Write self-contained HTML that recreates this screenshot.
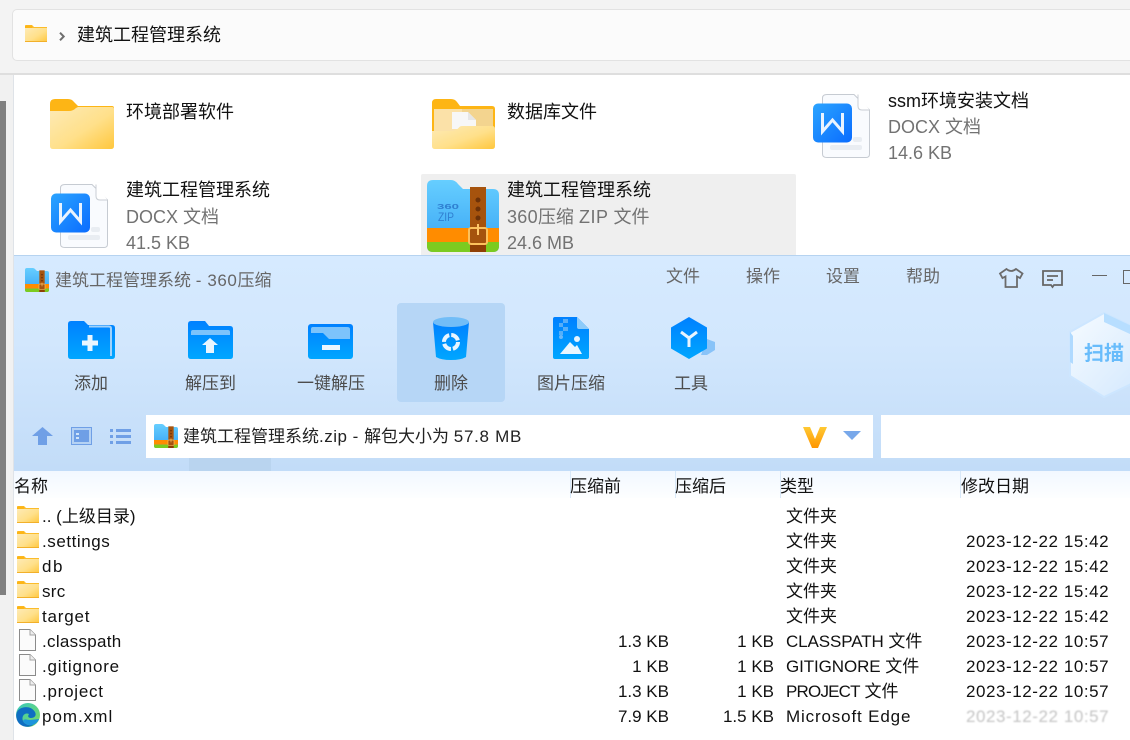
<!DOCTYPE html>
<html lang="zh"><head><meta charset="utf-8"><title>建筑工程管理系统</title>
<style>
html,body{margin:0;padding:0}
body{width:1130px;height:740px;position:relative;overflow:hidden;background:#fff;font-family:"Liberation Sans","Noto Sans CJK SC",sans-serif;font-size:17px;color:#111}
.a{position:absolute}
.t{position:absolute;white-space:nowrap;line-height:24px;height:24px}
.n{font-size:18px;color:#111}
.g{font-size:18px;color:#727272}
.m{color:#666}
.b{color:#4c4c4c}
.r{text-align:right;width:90px}
.d{letter-spacing:.56px}
.l{letter-spacing:.6px}
svg{position:absolute;overflow:visible;display:block}
</style></head><body>
<svg width="0" height="0" style="position:absolute">
<defs>
<linearGradient id="fg" x1="0" y1="0" x2="1" y2="1"><stop offset="0" stop-color="#fdeab6"/><stop offset=".55" stop-color="#ffe08a"/><stop offset="1" stop-color="#ffc73d"/></linearGradient>
<linearGradient id="wb" x1="0" y1="0" x2="1" y2="1"><stop offset="0" stop-color="#2ba4ff"/><stop offset="1" stop-color="#0a6cff"/></linearGradient>
<linearGradient id="zb" x1="0" y1="0" x2="0" y2="1"><stop offset="0" stop-color="#66ceff"/><stop offset="1" stop-color="#38a4f4"/></linearGradient>
<linearGradient id="tb" x1="0" y1="0" x2="0" y2="1"><stop offset="0" stop-color="#0080ff"/><stop offset="1" stop-color="#00a6ff"/></linearGradient>
<linearGradient id="eg" x1="0" y1="0" x2="1" y2="1"><stop offset="0" stop-color="#36c9c0"/><stop offset="1" stop-color="#7fdc5a"/></linearGradient>
<symbol id="sf" viewBox="0 0 22 17"><path d="M0 3H22V17H0Z" fill="url(#fg)"/><path d="M0 1Q0 0 1 0H7L9 2H22V3H0Z" fill="#fbbc2b"/><path d="M0 0.500H7V3H0Z" fill="#fdb515"/><rect y="16" width="22" height="1" fill="#f2b02a"/></symbol>
<symbol id="fi" viewBox="0 0 17 22"><path d="M.5.5H11L16.500 6V21.500H.5Z" fill="#fbfbfb" stroke="#8b8b8b"/><path d="M11 .5V6H16.500" fill="#eee" stroke="#a5a5a5"/></symbol>
<symbol id="wd" viewBox="0 0 57 64"><path d="M14 .5H41L56.500 16V60Q56.500 63.500 53 63.500H14Q9.500 63.500 9.500 60V4Q9.500 .5 14 .5Z" fill="#f9fbfe" stroke="#c6cbd2"/><path d="M45 .5V12Q45 16 49 16H56.500" fill="#fff" stroke="#c9ced4"/><rect x="17" y="51" width="32" height="5" rx="2" fill="#e9edf2"/><rect x="40" y="43" width="9" height="5" rx="2" fill="#e9edf2"/><rect y="9.500" width="39" height="39" rx="5" fill="url(#wb)"/><path d="M9.500 19V37.500L19.500 26L29.500 37.500V19" fill="none" stroke="#e9f3ff" stroke-width="3"/></symbol>
<symbol id="zip" viewBox="0 0 72 72"><path d="M0 6Q0 0 6 0H24Q28 0 31 4L36 9H66Q72 9 72 15V66Q72 72 66 72H6Q0 72 0 66Z" fill="url(#zb)"/><path d="M0 48H72V62H0Z" fill="#ff8c00"/><path d="M0 62H72V66Q72 72 66 72H6Q0 72 0 66Z" fill="#7ccb20"/><rect x="43" y="7" width="16" height="65" fill="#a6530d"/><rect x="43" y="64" width="16" height="8" fill="#8f3f05"/><circle cx="51" cy="20" r="2.500" fill="#6d3208"/><circle cx="51" cy="29" r="2.500" fill="#6d3208"/><circle cx="51" cy="38" r="2.500" fill="#6d3208"/><rect x="42" y="48" width="18" height="16" rx="2" fill="#a5530e" stroke="#fcc15c" stroke-width="2"/><rect x="50" y="44" width="2" height="11" fill="#ffc76a"/></symbol>
</defs></svg>

<!-- explorer background -->
<div class="a" style="left:0;top:0;width:1130px;height:73px;background:#f3f3f3"></div>
<div class="a" style="left:0;top:73px;width:1130px;height:2px;background:#dedede"></div>
<div class="a" style="left:12px;top:9px;width:1130px;height:50px;background:#fbfbfb;border:1px solid #e2e2e2;border-radius:5px"></div>
<div class="a" style="left:0;top:75px;width:13px;height:665px;background:#f1f1f1"></div>
<div class="a" style="left:0;top:101px;width:6px;height:494px;background:#808080"></div>
<div class="a" style="left:13px;top:75px;width:1px;height:665px;background:#dfe3e8"></div>

<svg style="left:25px;top:25px" width="22" height="17"><use href="#sf"/></svg>
<svg style="left:59px;top:32px" width="6" height="9"><path d="M1 .7L4.700 4.500L1 8.300" fill="none" stroke="#6f6f6f" stroke-width="2"/></svg>
<div class="t n" style="left:77px;top:23px">建筑工程管理系统</div>

<!-- explorer items -->
<div class="a" style="left:421px;top:174px;width:375px;height:81px;background:#efefef;border-radius:2px 2px 0 0"></div>

<svg style="left:50px;top:99px" width="64" height="50" viewBox="0 0 64 50"><path d="M0 5Q0 0 5 0H18Q22 0 24 3L28 7H62Q64 7 64 9V14H0Z" fill="#fdb515"/><path d="M0 12H19Q23 12 26 9L28 8H62Q64 8 64 10V47Q64 50 61 50H3Q0 50 0 47Z" fill="url(#fg)"/></svg>
<div class="t n" style="left:126px;top:100px">环境部署软件</div>

<svg style="left:432px;top:99px" width="63" height="50" viewBox="0 0 63 50"><path d="M0 4Q0 0 4 0H19Q23 0 25 3L28 7H60Q63 7 63 10V36H0Z" fill="#fdb515"/><path d="M2 10H61V34H2Z" fill="#f3d48f"/><path d="M2 10H30V34H2Z" fill="#fbe1a8"/><path d="M20 13H36L44 21V30H20Z" fill="#f7f7f7"/><path d="M36 13V21H44" fill="#e6e6e6"/><path d="M0 32H20Q24 32 27 28.500Q28 27 30 27H60Q63 27 63 30V47Q63 50 60 50H3Q0 50 0 47Z" fill="url(#fg)"/></svg>
<div class="t n" style="left:507px;top:100px">数据库文件</div>

<svg style="left:813px;top:94px" width="57" height="64"><use href="#wd"/></svg>
<div class="t n" style="left:888px;top:89px">ssm环境安装文档</div>
<div class="t g" style="left:888px;top:115px">DOCX 文档</div>
<div class="t g" style="left:888px;top:141px">14.6 KB</div>

<svg style="left:51px;top:184px" width="57" height="64"><use href="#wd"/></svg>
<div class="t n" style="left:126px;top:178px">建筑工程管理系统</div>
<div class="t g" style="left:126px;top:205px">DOCX 文档</div>
<div class="t g" style="left:126px;top:231px">41.5 KB</div>

<svg style="left:427px;top:180px" width="72" height="72"><use href="#zip"/></svg>
<svg style="left:437px;top:203px" width="24" height="22" viewBox="0 0 24 22"><text x="0" y="6" font-family="Liberation Sans" font-size="7" font-weight="bold" fill="#2f7fd1" textLength="22" lengthAdjust="spacingAndGlyphs">360</text><text x="1" y="18" font-family="Liberation Sans" font-size="12" fill="#2f7fd1" textLength="16" lengthAdjust="spacingAndGlyphs">ZIP</text></svg>
<div class="t n" style="left:507px;top:178px">建筑工程管理系统</div>
<div class="t g" style="left:507px;top:205px"><span style="letter-spacing:.3px">360</span>压缩 <span style="letter-spacing:.5px">ZIP</span> 文件</div>
<div class="t g" style="left:507px;top:231px">24.6 MB</div>

<!-- 360 window -->
<div class="a" style="left:14px;top:255px;width:1116px;height:216px;background:linear-gradient(#d6eaff,#d2e7fd 40%,#c2dcf8);border-top:1px solid #b6d3f0;box-sizing:border-box"></div>
<div class="a" style="left:14px;top:471px;width:1116px;height:269px;background:#fff"></div>
<div class="a" style="left:14px;top:471px;width:1116px;height:27px;background:linear-gradient(#f2f8ff,#fdfeff)"></div>
<div class="a" style="left:189px;top:458px;width:82px;height:13px;background:#b9d4ef"></div>

<svg style="left:25px;top:268px" width="24" height="24"><use href="#zip"/></svg>
<div class="t m" style="left:55px;top:269px">建筑工程管理系统 <span class="l">- 360</span>压缩</div>
<div class="t m" style="left:666px;top:265px">文件</div>
<div class="t m" style="left:746px;top:265px">操作</div>
<div class="t m" style="left:826px;top:265px">设置</div>
<div class="t m" style="left:906px;top:265px">帮助</div>

<svg style="left:999px;top:268px" width="24" height="20" viewBox="0 0 24 20"><path d="M7.500 1L1 5.500L3.500 10L6.500 8.500V19H18V8.500L21 10L23.500 5.500L17 1Q12 5 7.500 1Z" fill="none" stroke="#6b6b6b" stroke-width="1.800"/></svg>
<svg style="left:1042px;top:270px" width="21" height="19" viewBox="0 0 21 19"><path d="M1 1H20V15H12L10.500 17L9 15H1Z" fill="none" stroke="#666" stroke-width="1.800"/><path d="M5 6H16M5 10H11" stroke="#666" stroke-width="1.800"/></svg>
<div class="a" style="left:1092px;top:275px;width:15px;height:1px;background:#666"></div>
<div class="a" style="left:1123px;top:270px;width:12px;height:12px;border:1px solid #666"></div>

<!-- toolbar -->
<div class="a" style="left:397px;top:303px;width:108px;height:99px;background:#b6d6f6;border-radius:4px"></div>

<svg style="left:68px;top:321px" width="47" height="38" viewBox="0 0 47 38"><path d="M0 3Q0 0 3 0H16L20 4H44Q47 4 47 7V35Q47 38 44 38H3Q0 38 0 35Z" fill="url(#tb)"/><path d="M21 5.500H41Q43 5.500 43 7.500V35" fill="none" stroke="#9fd2fb" stroke-width="2"/><path d="M19.500 14H24.500V19.500H30V24.500H24.500V30H19.500V24.500H14V19.500H19.500Z" fill="#eaf6ff"/></svg>
<div class="t b" style="left:74px;top:372px">添加</div>

<svg style="left:188px;top:321px" width="45" height="38" viewBox="0 0 45 38"><path d="M0 3Q0 0 3 0H17L21 5H42Q45 5 45 8V35Q45 38 42 38H3Q0 38 0 35Z" fill="url(#tb)"/><path d="M3 11Q3 9 5 9H40Q42 9 42 11V14H3Z" fill="#7cc3fb"/><path d="M22 17L30 24H26V32H18V24H14Z" fill="#eaf6ff"/></svg>
<div class="t b" style="left:185px;top:372px">解压到</div>

<svg style="left:308px;top:324px" width="45" height="35" viewBox="0 0 45 35"><rect width="45" height="35" rx="3" fill="url(#tb)"/><path d="M3 5Q3 3 5 3H39Q42 3 42 5V15H21L15 9H3Z" fill="#7cc3fb"/><rect x="14" y="21" width="18" height="5" fill="#eaf6ff"/></svg>
<div class="t b" style="left:297px;top:372px">一键解压</div>

<svg style="left:433px;top:317px" width="36" height="43" viewBox="0 0 36 43"><path d="M0 5L3 40Q8 43 18 43T33 40L36 5Z" fill="url(#tb)"/><ellipse cx="18" cy="5" rx="18" ry="5" fill="#72bdf7"/><circle cx="18" cy="25" r="7" fill="none" stroke="#e8f5ff" stroke-width="4" stroke-dasharray="9 2"/></svg>
<div class="t b" style="left:434px;top:372px">删除</div>

<svg style="left:553px;top:317px" width="36" height="42" viewBox="0 0 36 42"><path d="M2 0H24L36 12V40Q36 42 34 42H2Q0 42 0 40V2Q0 0 2 0Z" fill="url(#tb)"/><path d="M24 0L36 12H26Q24 12 24 10Z" fill="#8ccbfa"/><path d="M6 2H15V6H10V10H15V14H10V18H6V14H10V10H6V6H10V2Z" fill="#6cb8f8" opacity=".8"/><circle cx="8" cy="20" r="2" fill="#6cb8f8"/><circle cx="24" cy="22" r="3" fill="#e6f4ff"/><path d="M7 37L17 25L22 30L24 28L29 37Z" fill="#e9f6ff"/></svg>
<div class="t b" style="left:537px;top:372px">图片压缩</div>

<svg style="left:671px;top:317px" width="45" height="43" viewBox="0 0 45 43"><path d="M36 22L44 25V33L36 38L30 38Z" fill="#88c3f8"/><path d="M18 0L36 10.500V31.500L18 42L0 31.500V10.500Z" fill="url(#tb)"/><path d="M10 15L18 21L26 15M18 21V30" fill="none" stroke="#e8f5ff" stroke-width="3"/></svg>
<div class="t b" style="left:674px;top:372px">工具</div>

<!-- scan badge -->
<svg style="left:1070px;top:312px" width="60" height="86" viewBox="0 0 60 86"><defs><linearGradient id="sc" x1="0" y1="0" x2="1" y2="1"><stop offset="0" stop-color="#f6fbff"/><stop offset="1" stop-color="#d3e8fe"/></linearGradient></defs><path d="M34 1L74 20V66L34 85L0 64V20Z" fill="url(#sc)" stroke="#cde6ff" stroke-width="2"/><path d="M34 1L34 10L60 22L70 18Z" fill="#b7deff"/><path d="M0 20V50L3 52V24Z" fill="#b0daff"/></svg>
<div class="t" style="left:1084px;top:342px;font-size:20px;font-weight:bold;color:#68bcfb">扫描</div>

<!-- nav -->
<svg style="left:32px;top:427px" width="21" height="18" viewBox="0 0 21 18"><path d="M10.500 0L21 9H15V18H6V9H0Z" fill="#6f9fe6"/></svg>
<svg style="left:71px;top:427px" width="21" height="18" viewBox="0 0 21 18"><rect x=".5" y=".5" width="20" height="17" fill="#b5d2f4" stroke="#6f9fe6"/><rect x="3" y="3" width="15" height="12" fill="#6f9fe6"/><rect x="5" y="6" width="3" height="2" fill="#d0e4fa"/><rect x="5" y="10" width="3" height="2" fill="#d0e4fa"/></svg>
<svg style="left:110px;top:429px" width="21" height="15" viewBox="0 0 21 15"><path d="M0 0H3V3H0ZM6 0H21V3H6ZM0 6H3V9H0ZM6 6H21V9H6ZM0 12H3V15H0ZM6 12H21V15H6Z" fill="#6f9fe6"/></svg>

<div class="a" style="left:146px;top:415px;width:727px;height:43px;background:#fff"></div>
<div class="a" style="left:881px;top:415px;width:249px;height:43px;background:#fff"></div>
<svg style="left:154px;top:424px" width="24" height="24"><use href="#zip"/></svg>
<div class="t" style="left:183px;top:425px;color:#222">建筑工程管理系统<span style="letter-spacing:.5px">.zip - </span>解包大小为 <span style="letter-spacing:.7px">57.8 MB</span></div>
<svg style="left:803px;top:427px" width="24" height="21" viewBox="0 0 24 21"><defs><linearGradient id="vg" x1="0" y1="0" x2="0" y2="1"><stop offset="0" stop-color="#ffc933"/><stop offset="1" stop-color="#ff9500"/></linearGradient></defs><path d="M0 0H7L12 12L17 0H24L15 21H9Z" fill="url(#vg)"/></svg>
<svg style="left:843px;top:431px" width="18" height="9" viewBox="0 0 18 9"><path d="M0 0H18L9 9Z" fill="#78a8ea"/></svg>

<!-- list header -->
<div class="a" style="left:570px;top:471px;width:1px;height:27px;background:#d8e8f8"></div>
<div class="a" style="left:675px;top:471px;width:1px;height:27px;background:#d8e8f8"></div>
<div class="a" style="left:780px;top:471px;width:1px;height:27px;background:#d8e8f8"></div>
<div class="a" style="left:960px;top:471px;width:1px;height:27px;background:#d8e8f8"></div>
<div class="t" style="left:14px;top:475px">名称</div>
<div class="t" style="left:570px;top:475px">压缩前</div>
<div class="t" style="left:675px;top:475px">压缩后</div>
<div class="t" style="left:780px;top:475px">类型</div>
<div class="t" style="left:961px;top:475px">修改日期</div>

<!-- rows -->
<svg style="left:17px;top:506px" width="22" height="17"><use href="#sf"/></svg>
<svg style="left:17px;top:531px" width="22" height="17"><use href="#sf"/></svg>
<svg style="left:17px;top:556px" width="22" height="17"><use href="#sf"/></svg>
<svg style="left:17px;top:581px" width="22" height="17"><use href="#sf"/></svg>
<svg style="left:17px;top:606px" width="22" height="17"><use href="#sf"/></svg>
<svg style="left:19px;top:629px" width="17" height="22"><use href="#fi"/></svg>
<svg style="left:19px;top:654px" width="17" height="22"><use href="#fi"/></svg>
<svg style="left:19px;top:679px" width="17" height="22"><use href="#fi"/></svg>
<svg style="left:16px;top:703px" width="24" height="24" viewBox="0 0 24 24"><circle cx="12" cy="12" r="12" fill="url(#eg)"/><path d="M1 9C4 3 15 2 19 9C21 13 18 15 15 15C13 15 11 14 13 11C9 9 5 13 7 18C9 22 14 23 18 21.500C14 25 4 25 1 17C0 14 0 11 1 9Z" fill="#0f6ec2"/><path d="M7 18C9 22 14 23 18 21.500C20 20.500 22 19 23 16L14 17C11 17 8 15 7 18Z" fill="#1c94dc"/></svg>

<div class="t" style="left:42px;top:505px">.. (上级目录)</div>
<div class="t" style="left:42px;top:530px;letter-spacing:.55px">.settings</div>
<div class="t" style="left:42px;top:555px;letter-spacing:1.500px">db</div>
<div class="t" style="left:42px;top:580px;letter-spacing:.3px">src</div>
<div class="t" style="left:42px;top:605px;letter-spacing:.8px">target</div>
<div class="t" style="left:42px;top:630px;letter-spacing:.3px">.classpath</div>
<div class="t" style="left:42px;top:655px;letter-spacing:.8px">.gitignore</div>
<div class="t" style="left:42px;top:680px;letter-spacing:.75px">.project</div>
<div class="t" style="left:42px;top:705px;letter-spacing:1px">pom.xml</div>

<div class="t r" style="left:579px;top:630px">1.3 KB</div>
<div class="t r" style="left:579px;top:655px">1 KB</div>
<div class="t r" style="left:579px;top:680px">1.3 KB</div>
<div class="t r" style="left:579px;top:705px">7.9 KB</div>
<div class="t r" style="left:684px;top:630px">1 KB</div>
<div class="t r" style="left:684px;top:655px">1 KB</div>
<div class="t r" style="left:684px;top:680px">1 KB</div>
<div class="t r" style="left:684px;top:705px">1.5 KB</div>

<div class="t" style="left:786px;top:505px">文件夹</div>
<div class="t" style="left:786px;top:530px">文件夹</div>
<div class="t" style="left:786px;top:555px">文件夹</div>
<div class="t" style="left:786px;top:580px">文件夹</div>
<div class="t" style="left:786px;top:605px">文件夹</div>
<div class="t" style="left:786px;top:630px"><span style="letter-spacing:-.1px">CLASSPATH</span> 文件</div>
<div class="t" style="left:786px;top:655px"><span style="letter-spacing:-.1px">GITIGNORE</span> 文件</div>
<div class="t" style="left:786px;top:680px"><span style="letter-spacing:-.8px">PROJECT</span> 文件</div>
<div class="t" style="left:786px;top:705px;letter-spacing:.85px">Microsoft Edge</div>

<div class="t d" style="left:966px;top:530px">2023-12-22 15:42</div>
<div class="t d" style="left:966px;top:555px">2023-12-22 15:42</div>
<div class="t d" style="left:966px;top:580px">2023-12-22 15:42</div>
<div class="t d" style="left:966px;top:605px">2023-12-22 15:42</div>
<div class="t d" style="left:966px;top:630px">2023-12-22 10:57</div>
<div class="t d" style="left:966px;top:655px">2023-12-22 10:57</div>
<div class="t d" style="left:966px;top:680px">2023-12-22 10:57</div>
<div class="t d" style="left:966px;top:705px;color:#c4c4c4;filter:blur(.8px)">2023-12-22 10:57</div>
</body></html>
